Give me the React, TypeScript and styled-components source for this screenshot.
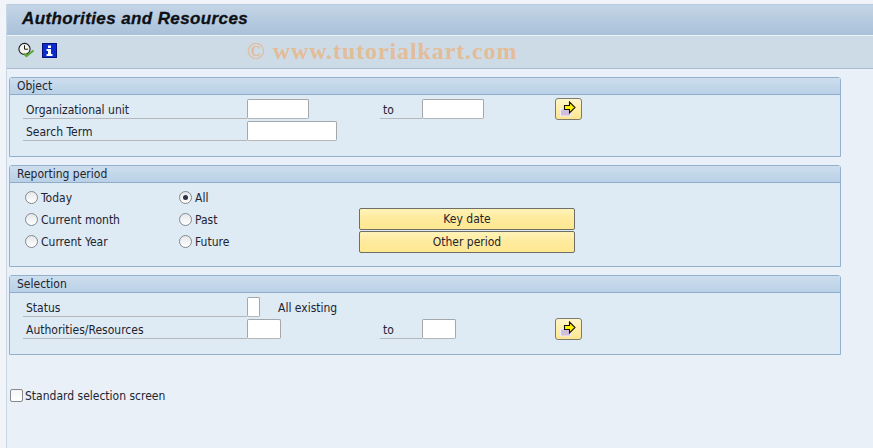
import React from 'react'
import styled, { createGlobalStyle } from 'styled-components'

const GlobalStyle = createGlobalStyle`
    html, body {
        margin: 0;
        padding: 0;
        background: #f1f5f9;
    }
    * {
        box-sizing: border-box;
    }
`

const Screen = styled.div`
    position: relative;
    width: 873px;
    height: 448px;
    overflow: hidden;
    padding: 4px 0 0 6px;
    font-family: "DejaVu Sans Condensed", "DejaVu Sans", sans-serif;
    font-stretch: condensed;
    font-size: 12px;
    color: #1c2530;
`

const Window = styled.div`
    height: 444px;
    background: #e9f0f7;
    border-left: 1px solid #c9d6e3;
`

const TitleBar = styled.div`
    display: flex;
    align-items: center;
    height: 32px;
    padding: 0 0 2px 15px;
    border-top: 1px solid #b9cade;
    border-bottom: 1px solid #eef3f8;
    background: linear-gradient(to bottom, #c4d5e6, #a9c1da);
`

const Title = styled.h1`
    margin: 0;
    font-family: "Liberation Sans", Arial, sans-serif;
    font-stretch: normal;
    font-size: 17px;
    font-style: italic;
    font-weight: 700;
    letter-spacing: 0.39px;
    color: #0d1014;
    -webkit-text-stroke: 0.3px #0d1014;
`

const Toolbar = styled.div`
    position: relative;
    display: flex;
    align-items: center;
    gap: 7px;
    height: 33px;
    padding: 0 0 4px 11px;
    background: #cddbe7;
    border-bottom: 1px solid #a9bccf;
`

const Watermark = styled.span`
    position: absolute;
    left: 240px;
    top: 2px;
    font-family: "Liberation Serif", serif;
    font-stretch: normal;
    font-size: 24px;
    font-weight: 700;
    letter-spacing: 0.9px;
    white-space: nowrap;
    color: #e3bc98;
`

const Content = styled.div`
    display: flex;
    flex-direction: column;
    gap: 8px;
    padding: 8px 32px 0 2px;
`

const Section = styled.section<{ $height: number }>`
    height: ${p => p.$height}px;
    background: #deeaf4;
    border: 1px solid #93b0cf;
    border-radius: 3px 3px 0 0;
`

const SectionHeader = styled.div`
    height: 17px;
    padding-left: 7px;
    line-height: 17px;
    background: linear-gradient(to bottom, #cddeee, #b9d0e6);
    border-bottom: 1px solid #8facca;
`

const SectionBody = styled.div`
    display: flex;
    flex-direction: column;
    gap: 2px;
    padding: 4px 0 0 13px;
`

const Row = styled.div`
    display: flex;
    align-items: flex-end;
    height: 20px;
`

const FieldLabel = styled.label<{ $width: number; $gapLeft?: number }>`
    width: ${p => p.$width}px;
    height: 20px;
    margin-left: ${p => p.$gapLeft ?? 0}px;
    padding-left: 3px;
    line-height: 22px;
    border-bottom: 1px solid #b4b8bc;
`

const Input = styled.input<{ $width: number }>`
    display: block;
    width: ${p => p.$width}px;
    height: 20px;
    margin: 0;
    padding: 0;
    background: #fff;
    border: 1px solid #a5a8ab;
    border-bottom-color: #b4b7ba;
    border-radius: 2px;
`

const StatusText = styled.span`
    margin-left: 18px;
    height: 20px;
    line-height: 22px;
`

const IconButton = styled.button<{ $gapLeft: number }>`
    display: flex;
    align-items: center;
    justify-content: center;
    width: 27px;
    height: 22px;
    margin: 0 0 -1px ${p => p.$gapLeft}px;
    padding: 0;
    background: linear-gradient(to bottom, #fff6c8, #ffe68e);
    border: 1px solid #7c7b70;
    border-radius: 3px;
`

const PeriodBody = styled.div`
    display: flex;
    padding: 7px 0 0 15px;
`

const RadioColumn = styled.div<{ $width: number }>`
    display: flex;
    flex-direction: column;
    gap: 8px;
    width: ${p => p.$width}px;
`

const RadioRow = styled.div`
    display: flex;
    align-items: flex-start;
    gap: 3px;
    height: 14px;
    line-height: 16px;
`

const RadioDot = styled.span<{ $checked?: boolean }>`
    display: flex;
    align-items: center;
    justify-content: center;
    width: 13px;
    height: 13px;
    margin-top: 1px;
    background: linear-gradient(to bottom, #e4e7ea, #fff);
    border: 1px solid #85898d;
    border-radius: 50%;

    &::after {
        content: '';
        display: ${p => (p.$checked ? 'block' : 'none')};
        width: 5px;
        height: 5px;
        border-radius: 50%;
        background: #2b3542;
    }
`

const PeriodButtons = styled.div`
    display: flex;
    flex-direction: column;
    gap: 1px;
    width: 216px;
    margin: 18px 0 0 26px;
`

const WideButton = styled.button`
    height: 22px;
    margin: 0;
    padding: 0;
    font: inherit;
    line-height: 18px;
    color: inherit;
    background: linear-gradient(to bottom, #fff3b8 0%, #ffeb9f 45%, #ffe891 100%);
    border: 1px solid #6f6e66;
    border-radius: 2px;
`

const CheckRow = styled.div`
    display: flex;
    align-items: flex-start;
    gap: 2px;
    margin: 34px 0 0 3px;
    height: 13px;
    line-height: 15px;
`

const CheckBox = styled.span`
    width: 13px;
    height: 13px;
    background: linear-gradient(to bottom, #f2f4f6, #fff);
    border: 1px solid #85898d;
    border-radius: 2px;
`

const ClockIcon = () => (
    <svg width="17" height="17" viewBox="0 0 17 17">
        <circle cx="6.5" cy="7" r="5.6" fill="#f4f4f0" stroke="#1a1a1a" strokeWidth="1.1" />
        <path d="M6.5 3.2V7.2H10" fill="none" stroke="#1a1a1a" strokeWidth="1" />
        <path d="M6 11.5L8.5 14L15.5 8.5" fill="none" stroke="#5aa83a" strokeWidth="2.1" />
    </svg>
)

const InfoIcon = () => (
    <svg width="15" height="15" viewBox="0 0 15 15">
        <rect width="15" height="15" fill="#06107a" />
        <rect x="1" y="1" width="13" height="13" fill="#0a2bd0" />
        <rect x="6" y="2.5" width="3" height="2.5" fill="#fff" />
        <path d="M4.5 6H9V11H10.5V13H4.5V11H6V8H4.5Z" fill="#fff" />
    </svg>
)

const ArrowIcon = () => (
    <svg width="21" height="17" viewBox="0 0 21 17">
        <rect x="2.5" y="8" width="10" height="7" fill="#d3bede" stroke="#f2ecf3" />
        <path d="M6.5 4.5H11.5V1L17 6.5L11.5 12V8.5H6.5Z" fill="#fff200" stroke="#111" strokeWidth="1.1" />
    </svg>
)

const RadioItem = ({ label, checked }: { label: string; checked?: boolean }) => (
    <RadioRow>
        <RadioDot $checked={checked} />
        {label}
    </RadioRow>
)

const App = () => {
    return (
        <Screen>
            <GlobalStyle />
            <Window>
                <TitleBar>
                    <Title>Authorities and Resources</Title>
                </TitleBar>
                <Toolbar>
                    <ClockIcon />
                    <InfoIcon />
                    <Watermark>© www.tutorialkart.com</Watermark>
                </Toolbar>
                <Content>
                    <Section $height={80}>
                        <SectionHeader>Object</SectionHeader>
                        <SectionBody>
                            <Row>
                                <FieldLabel $width={224}>Organizational unit</FieldLabel>
                                <Input $width={62} />
                                <FieldLabel $width={42} $gapLeft={71}>to</FieldLabel>
                                <Input $width={62} />
                                <IconButton $gapLeft={71}><ArrowIcon /></IconButton>
                            </Row>
                            <Row>
                                <FieldLabel $width={224}>Search Term</FieldLabel>
                                <Input $width={90} />
                            </Row>
                        </SectionBody>
                    </Section>
                    <Section $height={102}>
                        <SectionHeader>Reporting period</SectionHeader>
                        <PeriodBody>
                            <RadioColumn $width={154}>
                                <RadioItem label="Today" />
                                <RadioItem label="Current month" />
                                <RadioItem label="Current Year" />
                            </RadioColumn>
                            <RadioColumn $width={154}>
                                <RadioItem label="All" checked />
                                <RadioItem label="Past" />
                                <RadioItem label="Future" />
                            </RadioColumn>
                            <PeriodButtons>
                                <WideButton>Key date</WideButton>
                                <WideButton>Other period</WideButton>
                            </PeriodButtons>
                        </PeriodBody>
                    </Section>
                    <Section $height={80}>
                        <SectionHeader>Selection</SectionHeader>
                        <SectionBody>
                            <Row>
                                <FieldLabel $width={224}>Status</FieldLabel>
                                <Input $width={13} />
                                <StatusText>All existing</StatusText>
                            </Row>
                            <Row>
                                <FieldLabel $width={224}>Authorities/Resources</FieldLabel>
                                <Input $width={34} />
                                <FieldLabel $width={42} $gapLeft={99}>to</FieldLabel>
                                <Input $width={34} />
                                <IconButton $gapLeft={99}><ArrowIcon /></IconButton>
                            </Row>
                        </SectionBody>
                    </Section>
                </Content>
                <CheckRow>
                    <CheckBox />
                    Standard selection screen
                </CheckRow>
            </Window>
        </Screen>
    )
}

export default App
